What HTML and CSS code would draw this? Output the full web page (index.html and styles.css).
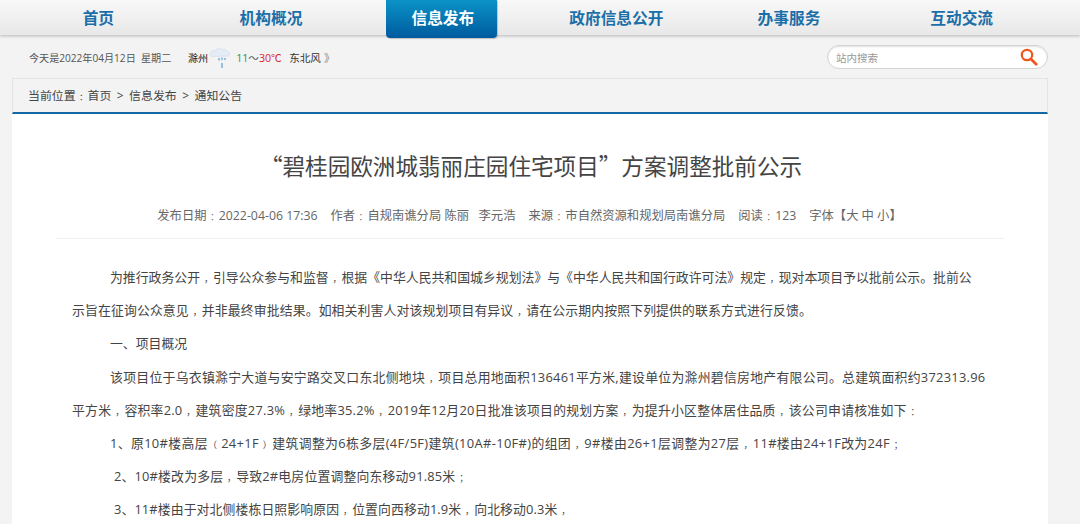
FILE: index.html
```html
<!DOCTYPE html>
<html lang="zh-CN">
<head>
<meta charset="utf-8">
<title>“碧桂园欧洲城翡丽庄园住宅项目”方案调整批前公示</title>
<link rel="stylesheet" href="styles.css">
</head>
<body>
<header class="nav">
  <ul class="nav-list">
    <li class="nav-item">首页</li>
    <li class="nav-item">机构概况</li>
    <li class="nav-item active">信息发布</li>
    <li class="nav-item">政府信息公开</li>
    <li class="nav-item">办事服务</li>
    <li class="nav-item">互动交流</li>
  </ul>
</header>
<div class="infobar">
  <div class="weather">
    <span class="date">今天是2022年04月12日&nbsp; 星期二</span>
    <span class="city">滁州</span>
    <svg class="wicon" width="27" height="24" viewBox="0 0 27 24" aria-hidden="true">
      <path d="M4 11.500c-2.400-.4-2.800-3.400-.4-4 .2-2 2.400-2.600 3.800-1.600C8.400 3 12.500 2.600 14 4.800c2.200-1.400 5-.2 5.200 2 2.600-.2 3.400 3.400.8 4.200z" fill="#e4edf5" stroke="#ccd9e6" stroke-width=".6"/>
      <path d="M11 13v2.500M14 12.500v2.500M14 18v5M17 13v2" stroke="#6fabd8" stroke-width="1.400" fill="none"/>
    </svg>
    <span class="temp"><span class="low">11</span>～<span class="high">30℃</span></span>
    <span class="wind">东北风</span>
    <span class="more">》</span>
  </div>
  <div class="search">
    <span class="search-text">站内搜索</span>
    <svg class="search-icon" width="18" height="18" viewBox="0 0 18 18" aria-hidden="true">
      <circle cx="7" cy="7" r="5.200" fill="none" stroke="#f0561c" stroke-width="2.200"/>
      <path d="M11 11l5.200 5.200" stroke="#f0561c" stroke-width="2.800" stroke-linecap="round"/>
    </svg>
  </div>
</div>
<main class="page">
  <nav class="crumb">当前位置<span class="p">：</span>首页<span class="sep">&gt;</span>信息发布<span class="sep">&gt;</span>通知公告</nav>
  <article class="article">
    <h1 class="title">“碧桂园欧洲城翡丽庄园住宅项目”方案调整批前公示</h1>
    <div class="meta">
      <span>发布日期<span class="p">：</span>2022-04-06 17:36</span>
      <span>作者<span class="p">：</span>自规南谯分局 陈丽&nbsp;&nbsp; 李元浩</span>
      <span>来源<span class="p">：</span>市自然资源和规划局南谯分局</span>
      <span>阅读<span class="p">：</span>123</span>
      <span>字体【大 中 小】</span>
    </div>
    <div class="body">
      <p class="para">为推行政务公开<span class="p">，</span>引导公众参与和监督<span class="p">，</span>根据《中华人民共和国城乡规划法》与《中华人民共和国行政许可法》规定<span class="p">，</span>现对本项目予以批前公示。批前公<br><span class="wide-f">示旨在征询公众意见<span class="p">，</span>并非最终审批结果。如相关利害人对该规划项目有异议<span class="p">，</span>请在公示期内按照下列提供的联系方式进行反馈。</span></p>
      <p class="para">一、项目概况</p>
      <p class="para"><span class="wide">该项目位于乌衣镇滁宁大道与安宁路交叉口东北侧地块<span class="p">，</span>项目总用地面积136461平方米,建设单位为滁州碧信房地产有限公司。总建筑面积约372313.96</span><br><span class="wide-b">平方米<span class="p">，</span>容积率2.0<span class="p">，</span>建筑密度27.3%<span class="p">，</span>绿地率35.2%<span class="p">，</span>2019年12月20日批准该项目的规划方案<span class="p">，</span>为提升小区整体居住品质<span class="p">，</span>该公司申请核准如下<span class="p">：</span></span></p>
      <p class="para wide-c">1、原10#楼高层<span class="lp">（</span>24+1F<span class="p">）</span>建筑调整为6栋多层(4F/5F)建筑(10A#-10F#)的组团<span class="p">，</span>9#楼由26+1层调整为27层<span class="p">，</span>11#楼由24+1F改为24F<span class="p">；</span></p>
      <p class="para para-b wide-d">2、10#楼改为多层<span class="p">，</span>导致2#电房位置调整向东移动91.85米<span class="p">；</span></p>
      <p class="para para-b wide-e">3、11#楼由于对北侧楼栋日照影响原因<span class="p">，</span>位置向西移动1.9米<span class="p">，</span>向北移动0.3米<span class="p">，</span></p>
    </div>
  </article>
</main>
</body>
</html>
```
FILE: styles.css
```css
* { box-sizing: border-box; }
html, body { margin: 0; height: 524px; overflow: hidden; }
body {
  background: #f3f3f3;
  font-family: "Open Sans", "Noto Sans CJK SC", sans-serif;
  color: #333;
  text-spacing-trim: space-all;
}
.nav {
  height: 35px;
  background: linear-gradient(#f8f8f8, #e9e8e8);
  box-shadow: 0 1px 3px rgba(0, 0, 0, .25);
  position: relative;
}
.nav-list {
  display: grid;
  grid-template-columns: repeat(6, 1fr);
  width: 1036px;
  margin: 0 0 0 12px;
  padding: 0;
  list-style: none;
}
.nav-item {
  height: 35px;
  line-height: 36px;
  text-align: center;
  font-size: 15.700px;
  font-weight: 700;
  color: #1b6fa9;
}
.active {
  position: relative;
  z-index: 1;
  justify-self: start;
  width: 111px;
  height: 38px;
  margin-left: 29px;
  padding-left: 2px;
  border-radius: 0 0 4px 4px;
  background: linear-gradient(#0a93c6, #005b9e);
  color: #fff;
  box-shadow: 1px 1px 1px rgba(0, 0, 0, .2);
}
.infobar {
  display: flex;
  justify-content: space-between;
  align-items: center;
  height: 43px;
  padding: 1px 32px 0 29px;
}
.weather { display: flex; align-items: center; font-size: 10.100px; color: #555; }
.date { width: 159px; }
.city { color: #222; }
.wicon { margin: 0 1px 0 0; }
.temp { width: 53px; font-size: 10.600px; }
.low { color: #1a9a4c; }
.high { color: #d8232a; }
.wind { color: #333; font-size: 10.600px; }
.more { margin-left: 3px; color: #888; font-size: 11px; }
.search {
  display: flex;
  justify-content: space-between;
  align-items: center;
  width: 221px;
  height: 24px;
  padding: 0 9px 0 8px;
  border: 1px solid #d3d3d3;
  border-radius: 12px;
  background: #fff;
  box-shadow: inset 0 1px 2px rgba(0, 0, 0, .12);
}
.search-text { font-size: 10.500px; color: #999; }
.page { width: 1036px; margin-left: 12px; }
.crumb {
  height: 36px;
  padding-left: 15px;
  line-height: 33px;
  font-size: 11.900px;
  color: #444;
  background: #f3f3f3;
  border: 1px solid #e4e4e4;
  border-bottom: 2px solid #1168a5;
}
.sep { margin: 0 5.500px; }
.p { font-size: .7em; line-height: 1; padding-left: .4286em; }
.lp { font-size: .7em; line-height: 1; padding-right: .4286em; }
.article {
  background: #fff;
  padding: 0 48px 0 60px;
  height: 420px;
}
.title {
  margin: 0;
  padding: 35px 10px 0 0;
  font-family: "Noto Sans CJK SC", sans-serif;
  font-size: 22.600px;
  font-weight: 400;
  line-height: 34px;
  text-align: center;
  color: #444;
}
.meta {
  display: flex;
  justify-content: center;
  gap: 13px;
  margin: 0 -4px 0 -16px;
  padding: 23px 1px 12px 0;
  font-size: 12.300px;
  line-height: 20px;
  color: #666;
  white-space: nowrap;
  border-bottom: 1px solid #f1f1f1;
}
.body { padding-top: 22px; }
.para {
  margin: 0;
  text-indent: 38px;
  font-size: 12.870px;
  line-height: 33.200px;
  color: #444;
  white-space: nowrap;
}
.wide { letter-spacing: .27px; }
.wide-b { letter-spacing: .23px; }
.wide-c { letter-spacing: .36px; }
.wide-d { letter-spacing: .17px; }
.wide-e { letter-spacing: .1px; }
.wide-f { letter-spacing: .12px; }
.para-b { text-indent: 42px; }
```
